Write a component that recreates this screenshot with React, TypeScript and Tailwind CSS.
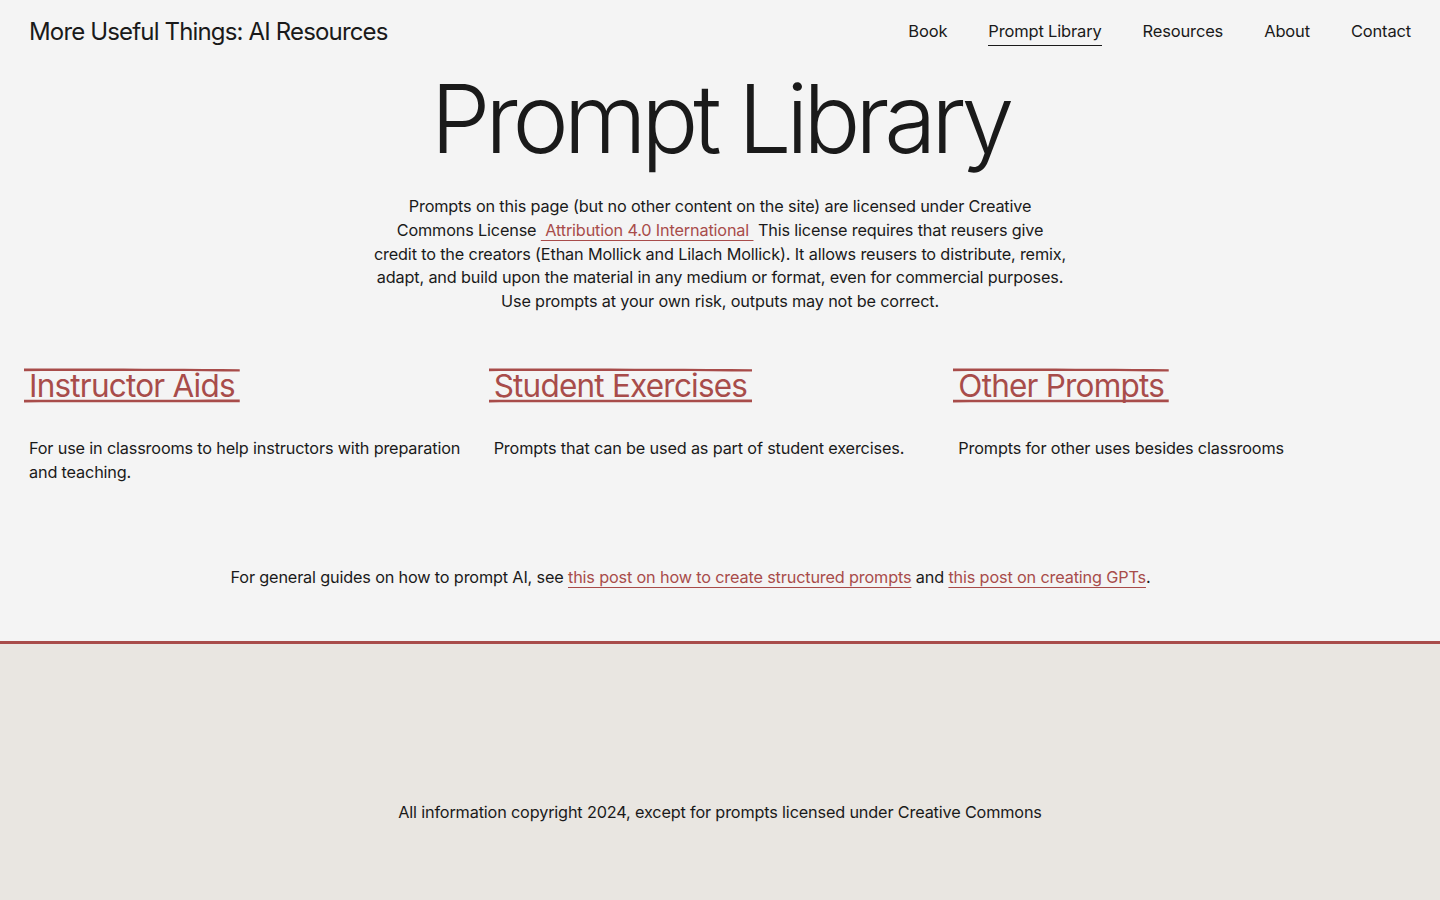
import React from "react";

const font = { fontFamily: "Inter, 'Liberation Sans', sans-serif" };

const Brush = ({ children }: { children: React.ReactNode }) => {
  return (
    <a href="#" className="relative inline-block h-[35px] px-[5px] text-[31.5px] leading-[35px] tracking-[-0.025em] text-[#a84c4a]">
      {/* brushed top and bottom strokes */}
      <svg className="absolute left-0 top-0 w-full h-[4px]" viewBox="0 0 200 4" preserveAspectRatio="none">
        <path d="M0 0.6 C60 0.2 140 0.6 200 1.2 L200 3.6 C140 3 60 2.8 0 3.2 Z" fill="#a84c4a" />
      </svg>
      <span className="block">{children}</span>
      <svg className="absolute left-0 bottom-0 w-full h-[4px]" viewBox="0 0 200 4" preserveAspectRatio="none">
        <path d="M0 0.8 C70 0.4 130 1 200 0.6 L200 3.2 C130 3.6 70 2.8 0 3.4 Z" fill="#a84c4a" />
      </svg>
    </a>
  );
};

const sections = [
  { title: "Instructor Aids", text: "For use in classrooms to help instructors with preparation and teaching." },
  { title: "Student Exercises", text: "Prompts that can be used as part of student exercises." },
  { title: "Other Prompts", text: "Prompts for other uses besides classrooms" },
];

const App = () => {
  return (
    <div style={font} className="min-h-[900px] bg-[#f4f4f4] text-[#1a1a1a] flex flex-col">
      {/* Header */}
      <header className="flex justify-between items-start px-[29px] pt-[16px] h-[64px]">
        <div className="text-[24px] leading-[32px] tracking-[-0.035em]">More Useful Things: AI Resources</div>
        <nav className="flex gap-[41px] text-[16.5px] leading-[30px] tracking-[-0.01em]">
          <a href="#">Book</a>
          <a href="#" className="border-b-[1.5px] border-[#1a1a1a] leading-[26px] h-[28px] mt-[2px]">Prompt Library</a>
          <a href="#">Resources</a>
          <a href="#">About</a>
          <a href="#">Contact</a>
        </nav>
      </header>

      {/* Title */}
      <h1 className="text-center text-[95px] leading-[104px] tracking-[-0.055em] font-light mt-[3px]">Prompt Library</h1>

      <p className="mx-auto mt-[24px] w-[700px] text-center text-[16.25px] leading-[23.75px] tracking-[-0.01em]">
        Prompts on this page (but no other content on the site) are licensed under Creative Commons License{" "}
        <a href="#" className="text-[#a84c4a] underline decoration-1 underline-offset-[4px]">{"\u00a0Attribution 4.0 International\u00a0"}</a>{" "}
        This license requires that reusers give
        <br />
        credit to the creators (Ethan Mollick and Lilach Mollick). It allows reusers to distribute, remix, adapt, and build upon the material in any medium or format, even for commercial purposes. Use prompts at your own risk, outputs may not be correct.
      </p>

      {/* Sections */}
      <div className="grid grid-cols-3 gap-[12px] px-[29px] mt-[54px]">
        {sections.map((s) => (
          <div key={s.title}>
            <div className="ml-[-5px]">
              <Brush>{s.title}</Brush>
            </div>
            <p className="mt-[33px] text-[16.25px] leading-[24px] tracking-[-0.01em]">{s.text}</p>
          </div>
        ))}
      </div>

      <p className="text-center mt-[81px] pr-[59px] text-[16.25px] leading-[24px] tracking-[-0.01em]">
        For general guides on how to prompt AI, see{" "}
        <a href="#" className="text-[#a84c4a] underline decoration-1 underline-offset-[4px]">this post on how to create structured prompts</a>{" "}
        and{" "}
        <a href="#" className="text-[#a84c4a] underline decoration-1 underline-offset-[4px]">this post on creating GPTs</a>.
      </p>

      {/* Footer */}
      <footer className="mt-[52px] border-t-[3px] border-[#a84c4a] bg-[#e9e6e1] flex-1 flex justify-center pt-[156px]">
        <p className="text-[16.25px] leading-[24px] tracking-[-0.01em]">
          All information copyright 2024, except for prompts licensed under Creative Commons
        </p>
      </footer>
    </div>
  );
};

export default App;
